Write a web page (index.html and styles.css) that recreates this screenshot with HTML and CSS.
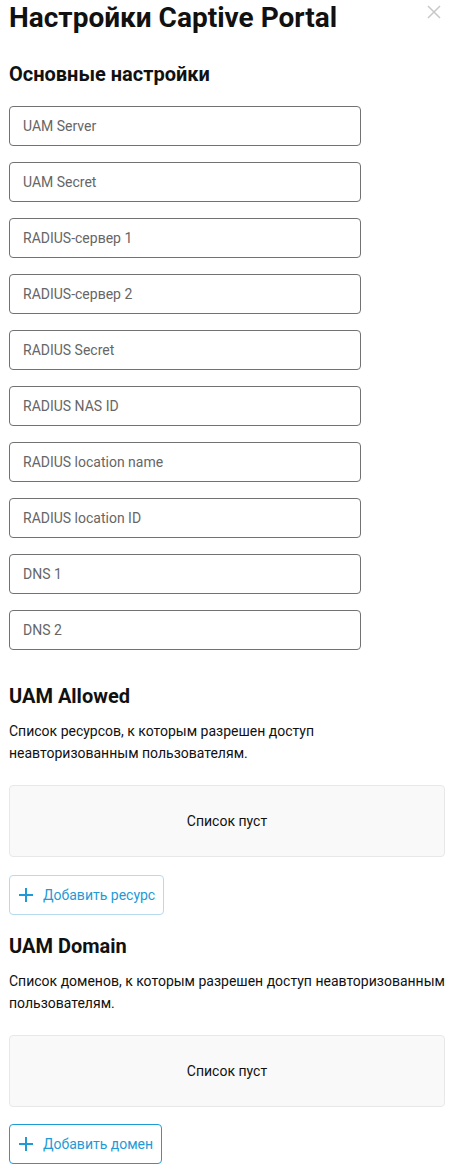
FILE: index.html
```html
<!DOCTYPE html>
<html lang="ru">
<head>
  <meta charset="UTF-8" />
  <title>Настройки Captive Portal</title>
  <link rel="stylesheet" href="styles.css">
</head>
<body>
  <div class="modal">
    <button class="close" aria-label="Закрыть">
      <svg width="14" height="14" viewBox="0 0 14 14">
        <path d="M1 1 L13 13 M13 1 L1 13" stroke="#c8c8c8" stroke-width="1.5" fill="none" />
      </svg>
    </button>

    <h1>Настройки Captive Portal</h1>

    <h2 class="section-title">Основные настройки</h2>
    <div class="fields">
      <input type="text" placeholder="UAM Server" />
      <input type="text" placeholder="UAM Secret" />
      <input type="text" placeholder="RADIUS-сервер 1" />
      <input type="text" placeholder="RADIUS-сервер 2" />
      <input type="text" placeholder="RADIUS Secret" />
      <input type="text" placeholder="RADIUS NAS ID" />
      <input type="text" placeholder="RADIUS location name" />
      <input type="text" placeholder="RADIUS location ID" />
      <input type="text" placeholder="DNS 1" />
      <input type="text" placeholder="DNS 2" />
    </div>

    <h2 class="section-title list-title">UAM Allowed</h2>
    <p class="hint">Список ресурсов, к которым разрешен доступ неавторизованным пользователям.</p>
    <div class="empty">Список пуст</div>
    <button class="add-btn">
      <svg width="14" height="14" viewBox="0 0 14 14">
        <path d="M7 0 V14 M0 7 H14" stroke="currentColor" stroke-width="2" fill="none" />
      </svg>
      Добавить ресурс
    </button>

    <h2 class="section-title list-title second">UAM Domain</h2>
    <p class="hint">Список доменов, к которым разрешен доступ неавторизованным пользователям.</p>
    <div class="empty">Список пуст</div>
    <button class="add-btn active">
      <svg width="14" height="14" viewBox="0 0 14 14">
        <path d="M7 0 V14 M0 7 H14" stroke="currentColor" stroke-width="2" fill="none" />
      </svg>
      Добавить домен
    </button>
  </div>
</body>
</html>
```

FILE: styles.css
```css
body {
  margin: 0;
  font-family: Roboto, "Liberation Sans", sans-serif;
  color: #111;
  background: #fff;
}

.modal {
  position: relative;
  padding: 0 9px 5px;
}

.close {
  position: absolute;
  top: 5px;
  right: 13px;
  padding: 0;
  border: none;
  background: none;
  cursor: pointer;
}

h1 {
  margin: 0;
  font-size: 28px;
  line-height: 36px;
  font-weight: 700;
}

.section-title {
  margin: 25px 0 0;
  font-size: 20px;
  line-height: 26px;
  font-weight: 700;
}

.fields {
  display: flex;
  flex-direction: column;
  gap: 16px;
  margin-top: 19px;
}

input {
  box-sizing: border-box;
  width: 352px;
  height: 40px;
  margin: 0;
  padding: 0 13px;
  font-family: inherit;
  font-size: 14px;
  border: 1px solid #727272;
  border-radius: 4px;
}

input::placeholder {
  color: #666;
}

.list-title {
  margin-top: 33px;
}

.list-title.second {
  margin-top: 18px;
}

.hint {
  margin: 11px 0 0;
  font-size: 14px;
  line-height: 22px;
}

.empty {
  display: flex;
  align-items: center;
  justify-content: center;
  height: 72px;
  box-sizing: border-box;
  margin-top: 21px;
  border: 1px solid #e8e8e8;
  border-radius: 4px;
  background: #f9f9f9;
  font-size: 14px;
}

.add-btn {
  display: flex;
  align-items: center;
  gap: 10px;
  height: 40px;
  margin-top: 18px;
  padding: 0 8px 0 9px;
  font-family: inherit;
  font-size: 14px;
  color: #1e9ad6;
  background: #fff;
  border: 1px solid #b6daf0;
  border-radius: 4px;
}

.add-btn.active {
  border-color: #1e9ad6;
  margin-top: 17px;
}
```
